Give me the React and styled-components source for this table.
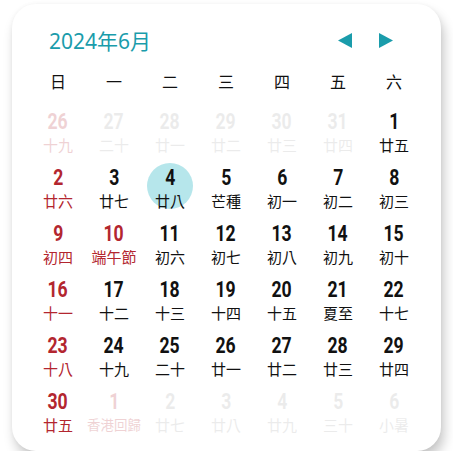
import styled, { createGlobalStyle } from "styled-components";

const GlobalStyle = createGlobalStyle`
  html, body {
    margin: 0;
    padding: 0;
    background: #ffffff;
  }
`;

const Page = styled.div`
  padding: 4px 12px 0 12px;
`;

const Card = styled.div`
  width: 429px;
  box-sizing: border-box;
  padding: 16px 19px 18px 18px;
  background: #ffffff;
  border-radius: 24px;
  box-shadow: 3px 8px 12px rgba(0, 0, 0, 0.22), 0 0 4px rgba(0, 0, 0, 0.04);
  font-family: "Noto Sans", "Noto Sans CJK TC", sans-serif;
`;

const Header = styled.div`
  display: flex;
  align-items: center;
  justify-content: space-between;
  height: 40px;
  padding: 0 29px 0 19px;
`;

const Title = styled.div`
  font-family: "Noto Sans", "Noto Sans CJK TC", sans-serif;
  font-size: 21px;
  color: #1a9cab;
`;

const Nav = styled.div`
  display: flex;
  gap: 27px;
  align-items: center;
`;

const Arrow = styled.button`
  border: none;
  background: none;
  padding: 0;
  width: 14px;
  height: 15px;
  display: flex;
  cursor: pointer;
`;

const Weekdays = styled.div`
  display: grid;
  grid-template-columns: repeat(7, 56px);
  margin-top: 5px;
  height: 32px;
  align-items: center;
`;

const Weekday = styled.div`
  text-align: center;
  font-family: "Noto Sans CJK TC", sans-serif;
  font-size: 16px;
  font-weight: 400;
  color: #111;
`;

const Grid = styled.div`
  display: grid;
  grid-template-columns: repeat(7, 56px);
  row-gap: 10px;
  margin-top: 10px;
`;

const Cell = styled.div`
  display: flex;
  justify-content: center;
`;

const Day = styled.div`
  width: 46px;
  height: 46px;
  border-radius: 50%;
  background: ${(p) => (p.$today ? "#b6e6eb" : "transparent")};
  display: flex;
  flex-direction: column;
  align-items: center;
  padding-top: 4px;
  box-sizing: border-box;
  color: ${(p) => (p.$red ? "#b3262f" : "#111")};
  opacity: ${(p) => (p.$faded ? (p.$red ? 0.2 : 0.08) : 1)};
`;

const Num = styled.div`
  font-family: Roboto, "DejaVu Sans", sans-serif;
  font-weight: bold;
  font-size: 22px;
  line-height: 22px;
  transform: scaleX(0.8);
`;

const Lunar = styled.div`
  font-family: "Noto Sans CJK TC", sans-serif;
  font-size: ${(p) => (p.$long ? "13.5px" : "15px")};
  line-height: 17px;
  margin-top: 3px;
  white-space: nowrap;
`;

const weekdays = ["日", "一", "二", "三", "四", "五", "六"];

const days = [
  { d: 26, l: "十九", f: true, r: true },
  { d: 27, l: "二十", f: true },
  { d: 28, l: "廿一", f: true },
  { d: 29, l: "廿二", f: true },
  { d: 30, l: "廿三", f: true },
  { d: 31, l: "廿四", f: true },
  { d: 1, l: "廿五" },
  { d: 2, l: "廿六", r: true },
  { d: 3, l: "廿七" },
  { d: 4, l: "廿八", t: true },
  { d: 5, l: "芒種" },
  { d: 6, l: "初一" },
  { d: 7, l: "初二" },
  { d: 8, l: "初三" },
  { d: 9, l: "初四", r: true },
  { d: 10, l: "端午節", r: true },
  { d: 11, l: "初六" },
  { d: 12, l: "初七" },
  { d: 13, l: "初八" },
  { d: 14, l: "初九" },
  { d: 15, l: "初十" },
  { d: 16, l: "十一", r: true },
  { d: 17, l: "十二" },
  { d: 18, l: "十三" },
  { d: 19, l: "十四" },
  { d: 20, l: "十五" },
  { d: 21, l: "夏至" },
  { d: 22, l: "十七" },
  { d: 23, l: "十八", r: true },
  { d: 24, l: "十九" },
  { d: 25, l: "二十" },
  { d: 26, l: "廿一" },
  { d: 27, l: "廿二" },
  { d: 28, l: "廿三" },
  { d: 29, l: "廿四" },
  { d: 30, l: "廿五", r: true },
  { d: 1, l: "香港回歸", f: true, r: true },
  { d: 2, l: "廿七", f: true },
  { d: 3, l: "廿八", f: true },
  { d: 4, l: "廿九", f: true },
  { d: 5, l: "三十", f: true },
  { d: 6, l: "小暑", f: true },
];

export default function App() {
  return (
    <Page>
      <GlobalStyle />
      <Card>
        <Header>
          <Title>2024年6月</Title>
          <Nav>
            <Arrow aria-label="上個月">
              <svg width="14" height="15" viewBox="0 0 14 15">
                <polygon points="14,0 14,15 0,7.5" fill="#1a9cab" />
              </svg>
            </Arrow>
            <Arrow aria-label="下個月">
              <svg width="14" height="15" viewBox="0 0 14 15">
                <polygon points="0,0 0,15 14,7.5" fill="#1a9cab" />
              </svg>
            </Arrow>
          </Nav>
        </Header>
        <Weekdays>
          {weekdays.map((w) => (
            <Weekday key={w}>{w}</Weekday>
          ))}
        </Weekdays>
        <Grid>
          {days.map((item, index) => (
            <Cell key={index}>
              <Day $today={item.t} $red={item.r} $faded={item.f}>
                <Num>{item.d}</Num>
                <Lunar $long={item.l.length > 3}>{item.l}</Lunar>
              </Day>
            </Cell>
          ))}
        </Grid>
      </Card>
    </Page>
  );
}
